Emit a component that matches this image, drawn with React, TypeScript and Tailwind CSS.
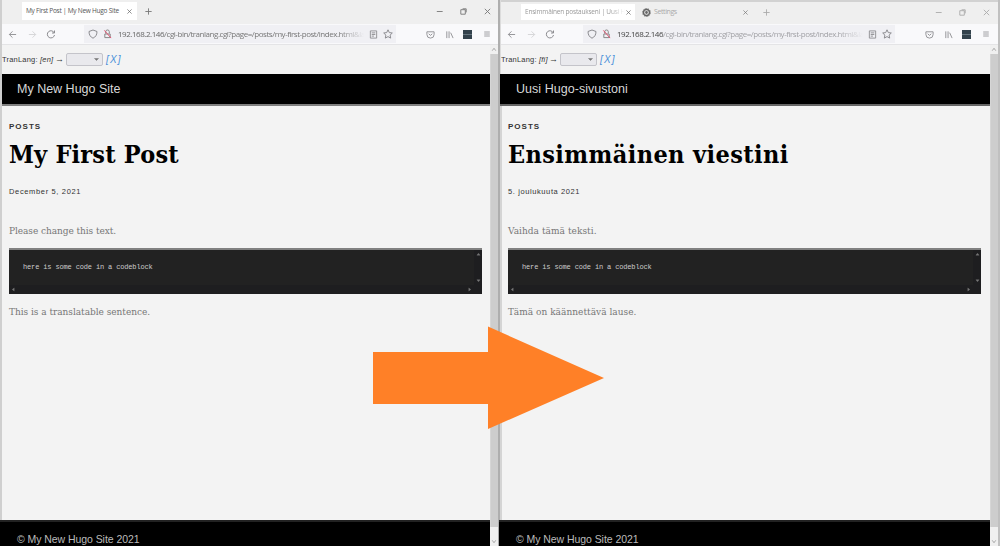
import type { ReactNode } from 'react';

type PaneProps = {
  active: boolean;
  tab: ReactNode;
  extraTab?: ReactNode;
  lang: ReactNode;
  site: ReactNode;
  title: ReactNode;
  date: ReactNode;
  intro: ReactNode;
  outro: ReactNode;
};

function Glyph({ d, className, fill = 'none' }: { d: string; className: string; fill?: string }) {
  return (
    <svg viewBox="0 0 10 10" className={className} fill={fill} stroke="currentColor" strokeWidth="1">
      <path d={d} />
    </svg>
  );
}

const CLOSE = 'M2 2L8 8M8 2L2 8';
const PLUS = 'M5 1.5V8.5M1.5 5H8.5';

function TitleBar({ active, tab, extraTab }: Pick<PaneProps, 'active' | 'tab' | 'extraTab'>) {
  return (
    <div className={`flex h-6 shrink-0 items-start bg-[#efefef] pl-[22px] ${active ? 'text-[#777]' : 'border-t-2 border-[#d2d2d2] text-[#aaa]'}`}>
      <div className={`flex shrink-0 items-center justify-between bg-white pr-[4px] pl-[4px] ${active ? 'mt-[2px] h-[18px] w-[115px] text-[#555]' : 'mt-[2px] h-4 w-[114px] text-[#999]'}`}>
        {tab}
        <Glyph d={CLOSE} className="h-[7px] w-[7px] shrink-0 text-[#666]" />
      </div>
      <div className={`flex flex-1 items-center ${active ? 'h-[23px]' : 'h-5'}`}>
        {extraTab}
        <Glyph d={PLUS} className={`h-[9px] w-[9px] ${active ? 'ml-[7px]' : 'ml-[13px]'}`} />
        <div className="flex-1" />
        <div className="mr-[7px] flex items-center gap-[15px]">
          <Glyph d="M2 5H8.5" className="h-[9px] w-[9px]" />
          <Glyph d="M2 3H7V8H2ZM4 2H8V6" className="h-[9px] w-[9px]" />
          <Glyph d={CLOSE} className="h-[9px] w-[9px]" />
        </div>
      </div>
    </div>
  );
}

function Toolbar({ active }: { active: boolean }) {
  return (
    <div className="flex h-5 shrink-0 items-center bg-[#f9f9fb] pl-2 text-[#8c8c90]">
      <Glyph d="M9 5H1.5M5 1.5L1.5 5L5 8.5" className="h-[9px] w-[9px]" />
      <Glyph d="M1 5H8.5M5 1.5L8.5 5L5 8.5" className="ml-[11px] h-[9px] w-[9px] text-[#d2d2d5]" />
      <Glyph d="M8.5 1.5V4H6M8.3 4A3.6 3.6 0 1 0 8.5 6" className="ml-[9px] h-[10px] w-[10px]" />
      <div className="ml-[28px] flex h-[18px] w-[312px] items-center bg-[#f0f0f4] pl-[4px]">
        <Glyph d="M5 1L9 2.5C9 6 7.5 8 5 9.2C2.5 8 1 6 1 2.5Z" className="h-[10px] w-[10px] shrink-0" />
        <svg viewBox="0 0 10 10" className="ml-[5px] h-[10px] w-[9px] shrink-0" fill="none" strokeWidth="1.1">
          <path d="M3 4.5V2.5A2 2 0 0 1 7 2.5V4.5M2 5H8V9H2Z" stroke="#888" />
          <path d="M1.5 1L9 9.5" stroke="#e2506e" />
        </svg>
        <div className={`ml-[6px] w-[246px] shrink-0 font-['Open_Sans',sans-serif] text-[8px] leading-3 tracking-[-0.46px] whitespace-nowrap [mask-image:linear-gradient(to_right,black_90%,transparent)] ${active ? 'text-[#777]' : 'text-[#a2a2a6]'}`}>
          <span className={active ? 'text-[#666]' : 'text-[#444]'}>192.168.2.146</span>
          /cgi-bin/tranlang.cgi?page=/posts/my-first-post/index.html&amp;la
        </div>
        <Glyph d="M1.5 1H8.5V9H1.5ZM3 3.2H7M3 5H7M3 6.8H5.5" className="ml-[5px] h-[9px] w-[9px] shrink-0" />
        <Glyph d="M5 .8L6.3 3.6L9.3 4L7.1 6.1L7.7 9.1L5 7.6L2.3 9.1L2.9 6.1L.7 4L3.7 3.6Z" className="ml-[5px] h-[10px] w-[10px] shrink-0" />
      </div>
      <Glyph d="M1 2H9V5A4 4 0 0 1 1 5ZM3 4.2L5 6L7 4.2" className="ml-[30px] h-[9px] w-[9px]" />
      <Glyph d="M2 1.5V9M4.5 1.5V9M6.3 3L9 9" className="ml-[10px] h-[9px] w-[9px]" />
      <div className="ml-[9px] flex h-[9px] w-[9px] items-center bg-[#33424c]">
        <div className="h-px w-full bg-[#66757e]" />
      </div>
      <Glyph d="M1.5 2.5H8.5M1.5 5H8.5M1.5 7.5H8.5" className="ml-[11px] h-2 w-2" />
    </div>
  );
}

function CodeBlock() {
  return (
    <div className="mt-[9px] flex h-[46px] w-[473px] flex-col border-t-2 border-[#808080] bg-[#222] text-[#777]">
      <div className="flex h-[35px]">
        <code className="flex-1 pt-[12px] pl-[14px] font-['Liberation_Mono',monospace] text-[7px] leading-[10px] tracking-[-0.15px] whitespace-nowrap text-[#ccc]">
          here is some code in a codeblock
        </code>
        <div className="flex w-2 flex-col items-center justify-between bg-[#1e1e20] py-[2px]">
          <Glyph d="M1 8L5 3L9 8Z" fill="currentColor" className="h-[4px] w-[5px]" />
          <Glyph d="M1 2L5 7L9 2Z" fill="currentColor" className="h-[4px] w-[5px]" />
        </div>
      </div>
      <div className="flex h-[9px] items-center justify-between bg-[#1e1e20] pr-[10px] pl-[2px]">
        <Glyph d="M8 1L3 5L8 9Z" fill="currentColor" className="h-[5px] w-[4px]" />
        <Glyph d="M2 1L7 5L2 9Z" fill="currentColor" className="h-[5px] w-[4px]" />
      </div>
    </div>
  );
}

function Scrollbar() {
  return (
    <div className="flex w-2 shrink-0 flex-col items-center bg-[#f0f0f0] text-[#777]">
      <Glyph d="M2 7L5 3L8 7" className="my-px h-[7px] w-[6px]" />
      <div className="w-full flex-1 border-l border-[#d6d6d6] bg-[#cdcdcd]" />
      <Glyph d="M2 3L5 7L8 3" className="mt-[11px] mb-px h-[7px] w-[6px]" />
    </div>
  );
}

function Pane({ active, tab, extraTab, lang, site, title, date, intro, outro }: PaneProps) {
  return (
    <div className="flex h-full w-[499px] shrink-0 flex-col bg-[#f3f3f3]">
      <TitleBar active={active} tab={tab} extraTab={extraTab} />
      <Toolbar active={active} />
      <div className="h-px shrink-0 bg-[#e4e4e6]" />
      <div className="flex min-h-0 flex-1">
        <div className="flex min-w-0 flex-1 flex-col">
          <div className="flex h-[29px] shrink-0 items-center pl-[2px] font-['Liberation_Sans',sans-serif] text-[7.5px] whitespace-nowrap text-[#333]">
            <div className={`flex shrink-0 items-center justify-between pr-[2px] ${active ? 'w-[64px]' : 'w-[59px]'}`}>{lang}</div>
            <div className="flex h-[13px] w-[37px] items-center justify-end rounded-[2px] border border-[#c4c4ca] bg-[#e9e9ed] pr-[3px] text-[#777]">
              <Glyph d="M1 3L5 7L9 3Z" fill="currentColor" className="h-[5px] w-[5px]" />
            </div>
            <span className="ml-[3px] text-[10px] tracking-[1.2px] text-[#4a90d9] italic">[X]</span>
          </div>
          <div className={`flex h-[32px] shrink-0 items-center border-b-2 bg-black pl-[17px] font-['Liberation_Sans',sans-serif] text-[12.5px] text-[#d8d8d8] ${active ? 'border-[#808080]' : 'border-[#666]'}`}>
            {site}
          </div>
          <div className="flex flex-1 flex-col items-start pt-[15px] pl-[9px] whitespace-nowrap">
            <div className="h-[12px] font-['Liberation_Sans',sans-serif] text-[8px] leading-[12px] font-bold tracking-[1px] text-[#333]">POSTS</div>
            <h1 className="mt-[4px] h-[34px] font-['DejaVu_Serif_Condensed','DejaVu_Serif',serif] text-[25px] leading-[36px] font-bold text-black">{title}</h1>
            <div className="mt-[15px] h-[12px] font-['Liberation_Sans',sans-serif] text-[7.5px] leading-[12px] text-[#333]">{date}</div>
            <p className="mt-[25px] h-[16px] font-['DejaVu_Serif_Condensed','DejaVu_Serif',serif] text-[10px] leading-[16px] text-[#777]">{intro}</p>
            <CodeBlock />
            <p className="mt-[10px] h-[16px] font-['DejaVu_Serif_Condensed','DejaVu_Serif',serif] text-[10px] leading-[16px] text-[#777]">{outro}</p>
          </div>
          <div className="h-[26px] shrink-0 border-t-2 border-[#222] bg-black pt-[11px] pl-[17px] font-['Liberation_Sans',sans-serif] text-[10.5px] leading-[13px] tracking-[-0.06px] text-[#bbb]">
            © My New Hugo Site 2021
          </div>
        </div>
        <Scrollbar />
        {active && <div className="w-px shrink-0 bg-[#aaa]" />}
      </div>
    </div>
  );
}

export default function App() {
  return (
    <div className="relative flex h-[546px] w-[1000px] overflow-hidden bg-[#f3f3f3]">
      <Pane
        active
        tab={<span className="font-['Open_Sans',sans-serif] text-[6.5px] tracking-[-0.25px] whitespace-nowrap">My First Post | My New Hugo Site</span>}
        lang={<><span className="tracking-[0.2px]">TranLang: <i>[en]</i></span><span className="text-[9px]">→</span></>}
        site={<span>My New Hugo Site</span>}
        title={<span className="tracking-[0.2px]">My First Post</span>}
        date={<span className="tracking-[0.65px]">December 5, 2021</span>}
        intro={<span className="tracking-[-0.06px]">Please change this text.</span>}
        outro={<span className="tracking-[-0.03px]">This is a translatable sentence.</span>}
      />
      <Pane
        active={false}
        tab={<span className="w-[101px] font-['Open_Sans',sans-serif] text-[6.5px] tracking-[-0.2px] whitespace-nowrap [mask-image:linear-gradient(to_right,black_85%,transparent)]">Ensimmäinen postaukseni | Uusi H</span>}
        extraTab={
          <div className="ml-[7px] flex w-[107px] items-center">
            <svg viewBox="0 0 10 10" className="h-[9px] w-[9px]" fill="none" stroke="#666" strokeWidth="1.5">
              <circle cx="5" cy="5" r="3.3" />
              <circle cx="5" cy="5" r="4.4" strokeWidth="1" strokeDasharray="1.5 1.2" />
              <circle cx="5" cy="5" r="0.8" />
            </svg>
            <span className="ml-[3px] flex-1 font-['Open_Sans',sans-serif] text-[7px] tracking-[-0.4px]">Settings</span>
            <Glyph d={CLOSE} className="h-[7px] w-[7px] text-[#777]" />
          </div>
        }
        lang={<><span className="tracking-[0.2px]">TranLang: <i>[fi]</i></span><span className="text-[9px]">→</span></>}
        site={<span className="tracking-[0.04px]">Uusi Hugo-sivustoni</span>}
        title={<span className="tracking-[0.4px]">Ensimmäinen viestini</span>}
        date={<span className="tracking-[0.6px]">5. joulukuuta 2021</span>}
        intro={<span className="tracking-[0.05px]">Vaihda tämä teksti.</span>}
        outro={<span className="tracking-[0.03px]">Tämä on käännettävä lause.</span>}
      />
      <div className="w-[2px] shrink-0 bg-[#c0c0c0]" />
      <div className="absolute top-0 left-0 h-[520px] w-[2px] bg-[#cfcfcf]" />
      <div className="absolute top-0 left-[498px] h-[520px] w-[2px] bg-[#aeaeae]" />
      <div className="absolute top-0 left-[500px] h-[74px] w-px bg-[#dcdcdc]" />
      <div className="absolute top-[106px] left-[500px] h-[414px] w-[2px] bg-[#d4d4d4]" />
      <svg viewBox="0 0 232 104" className="absolute top-[326px] left-[373px] h-[104px] w-[232px]" fill="#ff8027">
        <path d="M0 26H115V0.5L231 52L115 103V78H0Z" />
      </svg>
    </div>
  );
}
